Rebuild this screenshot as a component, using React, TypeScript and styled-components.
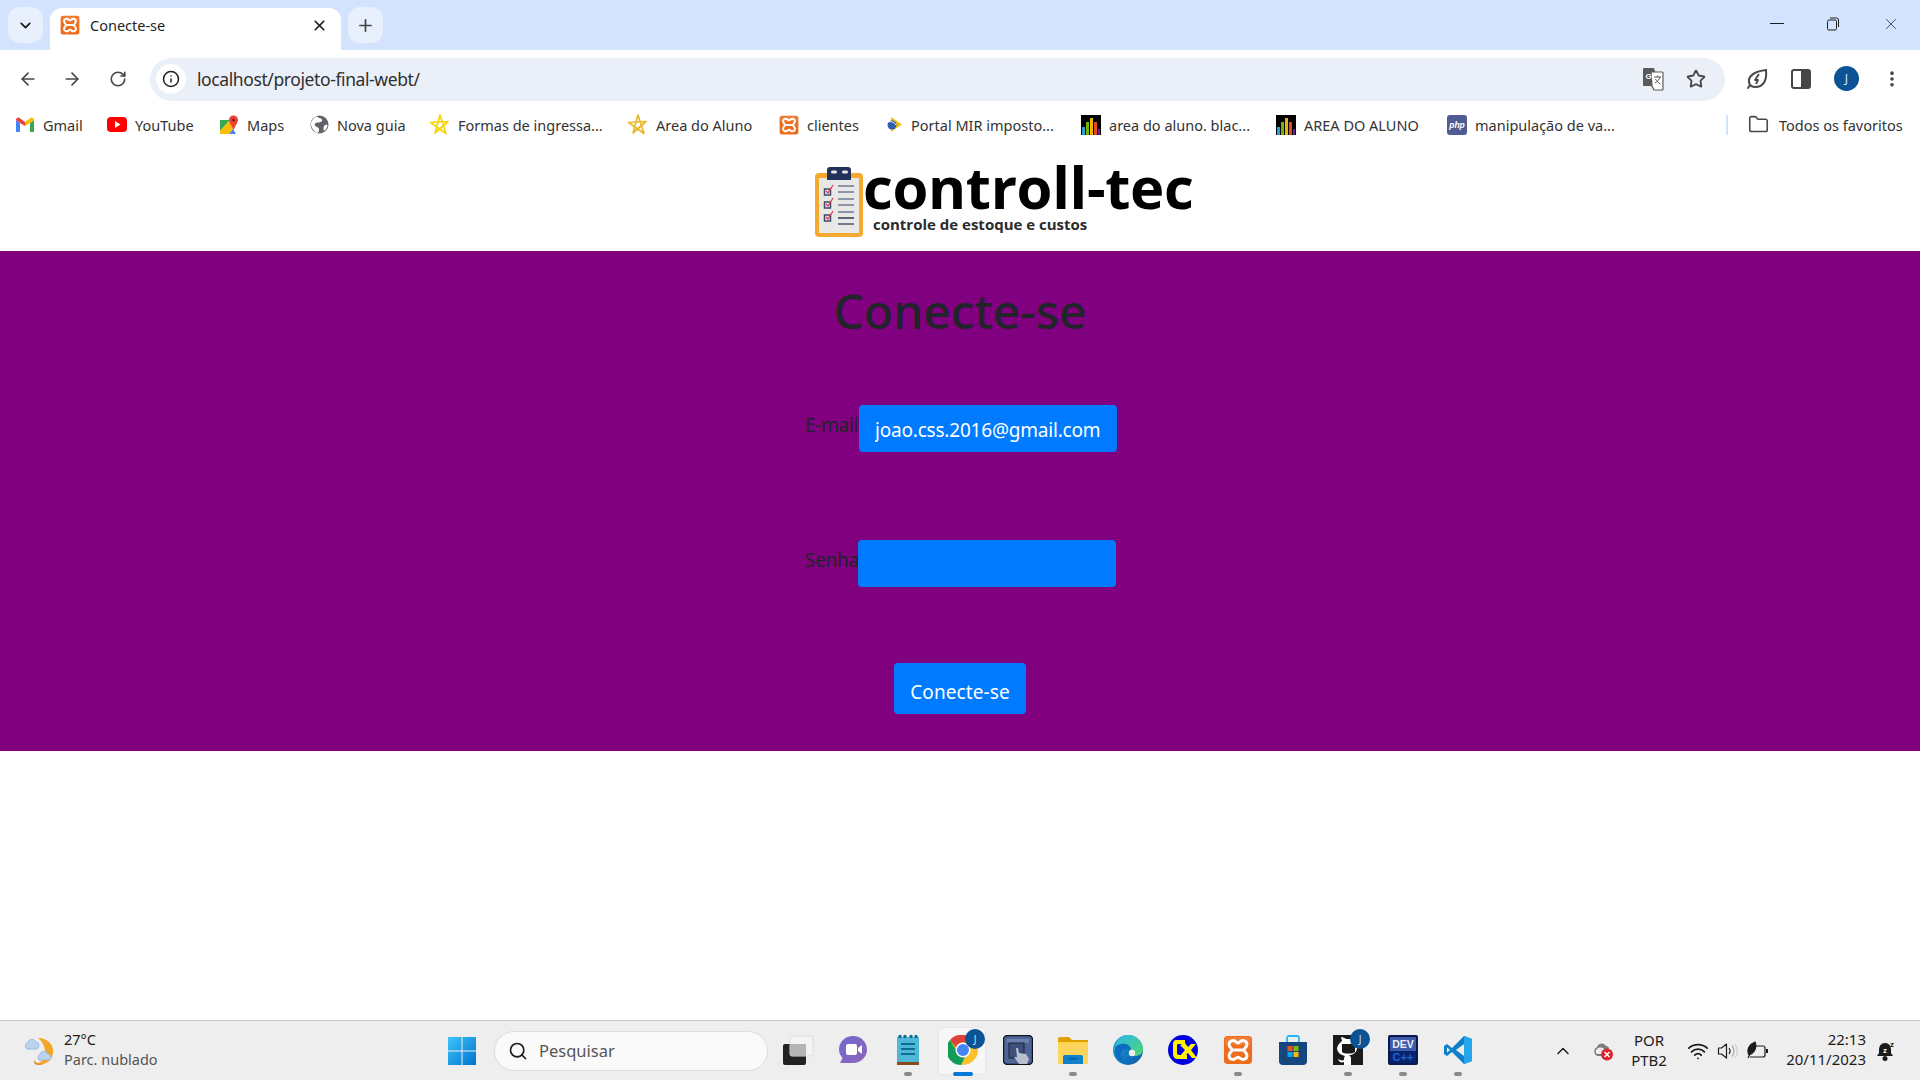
import styled, { createGlobalStyle } from "styled-components";
import { ArrowLeft, ArrowRight, ChevronDown, ChevronUp, Folder, Info, MoreVertical, Plus, RotateCw, Search, Star, Wifi, X } from "lucide-react";

const GlobalStyle = createGlobalStyle`
  html, body {
    margin: 0;
    padding: 0;
    background: #fff;
  }
  * {
    box-sizing: border-box;
  }
`;

const UI_FONT = `"Noto Sans", "Open Sans", sans-serif`;

const Page = styled.div`
  width: 1920px;
  height: 1080px;
  display: flex;
  flex-direction: column;
  overflow: hidden;
  font-family: ${UI_FONT};
`;

/* ---------- browser chrome ---------- */

const TabStrip = styled.div`
  height: 50px;
  background: #d3e3fd;
  display: flex;
  padding-left: 8px;
  flex-shrink: 0;
`;

const RoundButton = styled.div`
  width: 35px;
  height: 36px;
  margin-top: 7px;
  border-radius: 12px;
  background: #e9f0fd;
  color: #1f1f1f;
  display: flex;
  align-items: center;
  justify-content: center;
`;

const Tab = styled.div`
  width: 291px;
  height: 42px;
  margin: 8px 7px 0 7px;
  padding: 0 13px 8px 10px;
  border-radius: 12px 12px 0 0;
  background: #fff;
  display: flex;
  align-items: center;
  gap: 10px;
  font-size: 14.5px;
  color: #1f1f1f;
`;

const TabTitle = styled.span`
  flex: 1;
`;

const WindowControls = styled.div`
  margin-left: auto;
  display: flex;
  align-items: center;
  height: 50px;
  padding: 0 20px 2px 0;
  gap: 42px;
  color: #1f1f1f;
`;

const Toolbar = styled.div`
  height: 56px;
  flex-shrink: 0;
  background: #fff;
  display: flex;
  align-items: flex-start;
  padding: 8px 0 0 18px;
  color: #474747;
`;

const NavButton = styled.div<{ $pl?: number }>`
  width: 44px;
  height: 42px;
  display: flex;
  align-items: center;
  padding-left: ${(p) => p.$pl ?? 0}px;
`;

const Omnibox = styled.div`
  width: 1575px;
  height: 43px;
  border-radius: 22px;
  background: #ebeff8;
  display: flex;
  align-items: center;
  padding: 0 19px 2px 6px;
  font-size: 17.5px;
  color: #1f1f1f;
`;

const InfoChip = styled.div`
  width: 30px;
  height: 30px;
  border-radius: 50%;
  background: #fff;
  display: flex;
  align-items: center;
  justify-content: center;
  margin-right: 11px;
`;

const Url = styled.span`
  flex: 1;
  letter-spacing: -0.4px;
  color: #303030;
`;

const OmniIcons = styled.div`
  display: flex;
  align-items: center;
  gap: 22px;
`;

const ToolbarIcons = styled.div`
  display: flex;
  align-items: center;
  height: 41px;
  margin-left: 21px;
  gap: 23px;
`;

const Avatar = styled.div`
  width: 25px;
  height: 25px;
  border-radius: 50%;
  background: #0b5394;
  color: #dbe7f5;
  font-size: 12px;
  display: flex;
  align-items: center;
  justify-content: center;
`;

const BookmarksBar = styled.div`
  height: 39px;
  flex-shrink: 0;
  background: #fff;
  display: flex;
  align-items: center;
  padding: 0 0 2px 15px;
  font-size: 14.5px;
  color: #333;
`;

const Bookmark = styled.div<{ $w: number }>`
  width: ${(p) => p.$w}px;
  display: flex;
  align-items: center;
  gap: 8px;
  white-space: nowrap;
`;

const BarDivider = styled.div`
  width: 2px;
  height: 20px;
  background: #d3e3fd;
  margin: 0 20px 0 auto;
`;

const AllBookmarks = styled.div`
  display: flex;
  align-items: center;
  gap: 10px;
  width: 172px;
  white-space: nowrap;
`;

/* ---------- page content ---------- */

const LogoHeader = styled.header`
  height: 106px;
  flex-shrink: 0;
  background: #fff;
  display: flex;
  align-items: flex-start;
  padding: 22px 0 0 815px;
`;

const LogoWords = styled.div`
  margin-top: -8px;
  font-family: "Open Sans", sans-serif;
  font-weight: 700;
  color: #000;
`;

const LogoName = styled.div`
  font-size: 58px;
  line-height: 56px;
  letter-spacing: -0.35px;
`;

const LogoTag = styled.div`
  margin-left: 10px;
  font-size: 15px;
  line-height: 18px;
  color: #2b2b2b;
`;

const Main = styled.main`
  height: 500px;
  flex-shrink: 0;
  background: #800080;
  display: flex;
  flex-direction: column;
  align-items: center;
  padding-top: 31px;
  color: #212529;
`;

const Title = styled.h1`
  margin: 0 0 65px;
  font-size: 48px;
  font-weight: 500;
  line-height: 58px;
`;

const LoginForm = styled.form`
  width: 312px;
  margin-left: 2px;
  display: flex;
  flex-direction: column;
`;

const FormRow = styled.div<{ $mb: number }>`
  display: flex;
  align-items: flex-start;
  margin-bottom: ${(p) => p.$mb}px;
`;

const FieldLabel = styled.label<{ $w: number }>`
  width: ${(p) => p.$w}px;
  font-size: 19px;
  line-height: 41px;
  letter-spacing: -0.3px;
  white-space: nowrap;
`;

const Field = styled.input`
  width: 258px;
  height: 47px;
  border: 0;
  outline: 0;
  border-radius: 4px;
  background: #007bff;
  color: #fff;
  padding: 3px 0 0 16px;
  font-family: ${UI_FONT};
  font-size: 19px;
  letter-spacing: -0.2px;
`;

const SubmitButton = styled.button`
  width: 132px;
  height: 51px;
  margin-left: 89px;
  padding: 6px 0 0;
  border: 0;
  border-radius: 4px;
  background: #007bff;
  color: #fff;
  font-family: ${UI_FONT};
  font-size: 19px;
  letter-spacing: 0.1px;
`;

const Spacer = styled.div`
  flex: 1;
  background: #fff;
`;

/* ---------- taskbar ---------- */

const Taskbar = styled.footer`
  height: 60px;
  flex-shrink: 0;
  background: #eeeeee;
  border-top: 1px solid #c6c6c6;
  display: flex;
  align-items: center;
`;

const Weather = styled.div`
  width: 447px;
  padding-left: 24px;
  display: flex;
  align-items: center;
  gap: 8px;
  font-size: 14.5px;
  line-height: 20px;
  color: #1c1c1c;
`;

const WeatherText = styled.div`
  padding-bottom: 4px;
`;

const WeatherSub = styled.div`
  color: #555;
`;

const SearchBox = styled.div`
  width: 274px;
  height: 40px;
  margin-left: 17px;
  border-radius: 20px;
  background: #fafafa;
  border: 1px solid #dedede;
  display: flex;
  align-items: center;
  gap: 11px;
  padding-left: 13px;
  font-size: 16.5px;
  color: #555;
`;

const Apps = styled.div`
  margin-left: 2px;
  display: flex;
`;

const AppSlot = styled.div<{ $active?: boolean }>`
  position: relative;
  width: 55px;
  height: 59px;
  display: flex;
  align-items: center;
  justify-content: center;
  padding-bottom: 2px;

  ${(p) =>
    p.$active &&
    `
    &::before {
      content: "";
      position: absolute;
      left: 3px;
      right: 4px;
      top: 6px;
      bottom: 5px;
      border-radius: 5px;
      background: #f7f7f7;
      border: 1px solid #e6e6e6;
    }
  `}
  & > svg {
    position: relative;
  }
`;

const RunDot = styled.span<{ $active?: boolean }>`
  position: absolute;
  bottom: 4px;
  left: 50%;
  transform: translateX(-50%);
  width: ${(p) => (p.$active ? 20 : 8)}px;
  height: 4px;
  border-radius: 2px;
  background: ${(p) => (p.$active ? "#0078d4" : "#8a8a8a")};
`;

const Badge = styled.span`
  position: absolute;
  top: 8px;
  right: 5px;
  width: 20px;
  height: 20px;
  border-radius: 50%;
  background: #0b5394;
  color: #cfe0f2;
  font-size: 10px;
  display: flex;
  align-items: center;
  justify-content: center;
`;

const Tray = styled.div`
  margin-left: auto;
  padding-right: 14px;
  display: flex;
  align-items: center;
  color: #1c1c1c;
  font-size: 15px;
`;

const TrayCell = styled.div<{ $w: number }>`
  width: ${(p) => p.$w}px;
  display: flex;
  align-items: center;
  justify-content: center;
`;

const LangBlock = styled.div`
  width: 52px;
  margin-right: 8px;
  padding-bottom: 2px;
  text-align: center;
  line-height: 20px;
`;

const Clock = styled.div`
  width: 84px;
  padding-bottom: 4px;
  text-align: right;
  line-height: 20px;
  margin-left: 9px;
  white-space: nowrap;
`;

/* ---------- drawn icons ---------- */

const XamppIcon = ({ size = 20 }: { size?: number }) => (
  <svg width={size} height={size} viewBox="0 0 32 32">
    <rect x="1" y="1" width="30" height="30" rx="4" fill="#ed6d1d" />
    <rect x="2" y="2" width="28" height="9" rx="3" fill="#f28b4a" opacity="0.6" />
    <path
      d="M6.5 10c0-4 4.5-5 7-3 1 .8 1.700 1.400 2.500 1.400S17.500 7.800 18.500 7c2.500-2 7-1 7 3 0 3-2.500 4-3.500 6 1 2 3.500 3 3.500 6 0 4-4.500 5-7 3-1-.8-1.700-1.400-2.500-1.400S14.500 24.200 13.500 25c-2.500 2-7 1-7-3 0-3 2.500-4 3.500-6-1-2-3.500-3-3.500-6z"
      fill="none"
      stroke="#fff"
      strokeWidth="3.200"
    />
    <path d="M11 16h10" stroke="#fff" strokeWidth="3.200" />
  </svg>
);

const GmailIcon = () => (
  <svg width="20" height="16" viewBox="0 0 20 16">
    <path d="M1 15V3l4 3v9z" fill="#4285f4" />
    <path d="M15 15V6l4-3v12z" fill="#34a853" />
    <path d="M5 6 1 3c0-2 2-3 3.500-2L10 5v4z" fill="#ea4335" />
    <path d="m15 6 4-3c0-2-2-3-3.500-2L10 5v4z" fill="#fbbc04" />
  </svg>
);

const YouTubeIcon = () => (
  <svg width="20" height="15" viewBox="0 0 20 15">
    <rect width="20" height="15" rx="4" fill="#f00" />
    <path d="m8 4 5.500 3.500L8 11z" fill="#fff" />
  </svg>
);

const MapsIcon = () => (
  <svg width="20" height="20" viewBox="0 0 20 20">
    <path d="M1 5h10L1 16z" fill="#34a853" />
    <path d="M1 16 11 5l3 9-4 5H1z" fill="#fbbc04" />
    <path d="M10 19l4-5 3 5z" fill="#4285f4" />
    <circle cx="14.500" cy="5" r="4.500" fill="#ea4335" />
    <path d="m11 8 3.500 7L18 8z" fill="#ea4335" />
    <circle cx="14.500" cy="5" r="1.600" fill="#8e1b12" />
  </svg>
);

const GlobeIcon = () => (
  <svg width="19" height="19" viewBox="0 0 19 19">
    <circle cx="9.500" cy="9.500" r="9" fill="#5f6368" />
    <path d="M7 1.500c1 2 4 1 5 3s-2 3-4 3-4 1-3 3 4 1 4 4-1 3-2 3.500C4 16 1 13 1 9c0-3 3-7 6-7.500zM15 10c2-.5 2.500 0 2.500 1-.5 2-2 4-3.500 5-1-2-.5-5 1-6z" fill="#fff" />
  </svg>
);

// the two bookmark stars are hand drawn in one stroke, crossing themselves
const StarOutlineIcon = ({ color }: { color: string }) => (
  <svg width="21" height="21" viewBox="0 0 21 21">
    <path d="M11 1 6 19 19 7.500 1.500 8.500 17 19.500z" fill="none" stroke={color} strokeWidth="1.700" strokeLinejoin="round" />
  </svg>
);

const PortalIcon = () => (
  <svg width="17" height="17" viewBox="0 0 17 17">
    <path d="M5 1l11 7.500L5 16z" fill="#f4c20d" />
    <circle cx="6" cy="9" r="4.500" fill="#2f5fb3" />
    <path d="M2 6c3-1 6 0 8 3" stroke="#fff" strokeWidth="1" fill="none" />
  </svg>
);

const BarsIcon = () => (
  <svg width="20" height="20" viewBox="0 0 20 20">
    <rect width="20" height="20" fill="#000" />
    <rect x="1" y="12" width="3" height="8" fill="#2a9fd6" />
    <rect x="5" y="7" width="3" height="13" fill="#77b300" />
    <rect x="9" y="3" width="3" height="17" fill="#e6b800" />
    <rect x="13" y="7" width="3" height="13" fill="#e64a19" />
    <rect x="17" y="14" width="2" height="6" fill="#6a1b9a" />
  </svg>
);

const PhpIcon = () => (
  <svg width="20" height="20" viewBox="0 0 20 20">
    <rect width="20" height="20" rx="3" fill="#4f5b93" />
    <text x="10" y="13" fontFamily="Liberation Sans" fontSize="8.500" fontStyle="italic" fontWeight="700" textAnchor="middle" fill="#fff">
      php
    </text>
  </svg>
);

const TranslateIcon = () => (
  <svg width="22" height="24" viewBox="0 0 22 24">
    <path d="M2 1h10l6 18H2a1 1 0 0 1-1-1V2a1 1 0 0 1 1-1z" fill="#5a5a5a" />
    <path d="M9 5h11a1 1 0 0 1 1 1v16a1 1 0 0 1-1 1h-8l-2-4z" fill="#fff" stroke="#5a5a5a" strokeWidth="1.200" />
    <text x="6.500" y="12" fontFamily="Liberation Sans" fontSize="8" fontWeight="700" textAnchor="middle" fill="#fff">
      G
    </text>
    <path d="M12 10h7M15.500 8.500V10M18 10c-1 3-3 5-5 6M13.500 12c1 2 3 4 5 5" stroke="#5a5a5a" strokeWidth="1" fill="none" />
  </svg>
);

const LeafBoltIcon = () => (
  <svg width="22" height="24" viewBox="0 0 22 24">
    <path d="M4 18C1 12 4 5 20 3c1 10-2 17-11 17-2 0-4-1-5-2zM4 18l-2 3" fill="none" stroke="#474747" strokeWidth="2" strokeLinecap="round" />
    <path d="m13 7-4 6h3l-2 4" fill="none" stroke="#474747" strokeWidth="1.800" strokeLinejoin="round" />
  </svg>
);

const SidePanelIcon = () => (
  <svg width="20" height="20" viewBox="0 0 20 20">
    <rect x="1" y="1" width="18" height="18" rx="2" fill="none" stroke="#474747" strokeWidth="2" />
    <rect x="10" y="1" width="9" height="18" fill="#474747" />
  </svg>
);

const RestoreIcon = () => (
  <svg width="14" height="14" viewBox="0 0 14 14" fill="none" stroke="#1f1f1f" strokeWidth="1">
    <rect x="1.500" y="3" width="9" height="10" rx="1.500" />
    <path d="M4 1h6.500A2 2 0 0 1 12.500 3v7" />
  </svg>
);

const ClipboardLogo = () => (
  <svg width="48" height="70" viewBox="0 0 48 70">
    <rect x="0" y="6" width="48" height="64" rx="4" fill="#f5a92e" />
    <rect x="4" y="11" width="40" height="55" fill="#e8e8e6" />
    <path d="M12 6V3a3 3 0 0 1 3-3h18a3 3 0 0 1 3 3v10H12z" fill="#22325a" />
    <rect x="16" y="3.500" width="6" height="3" rx="1.500" fill="#e8e8e6" />
    <rect x="27" y="3.500" width="6" height="3" rx="1.500" fill="#e8e8e6" />
    {[22, 35, 48].map((y) => (
      <g key={y}>
        <rect x="9.500" y={y} width="6" height="6" fill="none" stroke="#3e4a6b" strokeWidth="1.500" />
        <path d={`M11 ${y + 2}l2 2 5-8`} fill="none" stroke="#e5344a" strokeWidth="1.200" />
        <path d={`M23 ${y - 3}h16M23 ${y + 3}h16`} stroke="#6f7b94" strokeWidth="1.600" />
      </g>
    ))}
    <path d="M23 51h16M23 57h16" stroke="#4c5673" strokeWidth="1.600" />
  </svg>
);

const WeatherIcon = () => (
  <svg width="32" height="30" viewBox="0 0 32 30">
    <path d="M14 2c10 0 16 7 15 15-1 8-8 13-16 11 6-3 9-8 8-14-1-5-3-9-7-12z" fill="#f5a524" />
    <path d="M10 24c2 3 4 4 8 4 1 0-3 2-7 0-1-1-1-3-1-4z" fill="#e5801c" />
    <path d="M3 13a4 4 0 0 1 1-7c1-3 6-4 8 0 3 0 4 5 1 7z" fill="#bcd3ef" stroke="#8fb0dd" strokeWidth="0.800" />
    <path d="M15 24a4 4 0 0 1 1-6c1-3 6-4 8 0 3 0 4 5 1 6z" fill="#bcd3ef" stroke="#8fb0dd" strokeWidth="0.800" />
  </svg>
);

const StartIcon = () => (
  <svg width="30" height="30" viewBox="0 0 30 30">
    <defs>
      <linearGradient id="startGrad" x1="0" y1="0" x2="1" y2="1">
        <stop offset="0" stopColor="#3fc5f8" />
        <stop offset="1" stopColor="#0071cf" />
      </linearGradient>
    </defs>
    <path d="M1 1h13.500v13.500H1zM15.500 1H29v13.500H15.500zM1 15.500h13.500V29H1zM15.500 15.500H29V29H15.500z" fill="url(#startGrad)" />
  </svg>
);

const TaskViewIcon = () => (
  <svg width="32" height="30" viewBox="0 0 32 30">
    <rect x="1" y="9" width="23" height="21" rx="2" fill="#222" />
    <rect x="8" y="1" width="23" height="20" rx="2" fill="#f4f4f4" stroke="#ddd" />
    <rect x="8" y="9" width="16" height="12" fill="#b5b5b5" />
  </svg>
);

const ChatIcon = () => (
  <svg width="30" height="30" viewBox="0 0 30 30">
    <defs>
      <linearGradient id="chatGrad" x1="0" y1="0" x2="1" y2="1">
        <stop offset="0" stopColor="#6f6bd0" />
        <stop offset="1" stopColor="#8f63b8" />
      </linearGradient>
    </defs>
    <path d="M15 1c8 0 14 6 14 13.500S23 28 15 28H2l2.500-5C2.500 20.500 1 18 1 14.500 1 7 7 1 15 1z" fill="url(#chatGrad)" />
    <rect x="8" y="9" width="11" height="11" rx="2" fill="#fff" />
    <path d="m20 13 4-3v9l-4-3z" fill="#fff" />
  </svg>
);

const NotepadIcon = () => (
  <svg width="24" height="31" viewBox="0 0 24 31">
    <rect x="1" y="3" width="22" height="26" fill="#4fb8d8" />
    <rect x="1" y="28" width="22" height="3" fill="#8a4a1c" />
    <path d="M5 10h14M5 15h14M5 20h14" stroke="#0d6d8f" strokeWidth="2" />
    {[4, 9, 15, 20].map((x) => (
      <circle key={x} cx={x} cy="2.500" r="1.700" fill="#0d6d8f" />
    ))}
  </svg>
);

const ChromeIcon = () => (
  <svg width="30" height="30" viewBox="0 0 30 30">
    <circle cx="15" cy="15" r="15" fill="#fbc02d" />
    <path d="M15 0a15 15 0 0 1 13 7.500H15a7.500 7.500 0 0 0-7 5L2 5A15 15 0 0 1 15 0z" fill="#db4437" />
    <path d="M2 5l6 10a7.500 7.500 0 0 0 9 7l-4 7.900A15 15 0 0 1 2 5z" fill="#0f9d58" />
    <circle cx="15" cy="15" r="7.500" fill="#fff" />
    <circle cx="15" cy="15" r="6" fill="#4285f4" />
  </svg>
);

const TouchIcon = () => (
  <svg width="30" height="30" viewBox="0 0 30 30">
    <rect x="0.500" y="0.500" width="29" height="29" rx="4" fill="#4f6496" stroke="#10131c" strokeWidth="1.400" />
    <rect x="4" y="4" width="22" height="4" fill="#7f93bd" opacity="0.6" />
    <rect x="6" y="8" width="15" height="15" fill="#3e4f7a" stroke="#1b2238" />
    <path d="M13 13l2 0 1 5 7 1 3 5-2 5h-8l-5-7 3 0z" fill="#b8bfcd" />
  </svg>
);

const FolderAppIcon = () => (
  <svg width="30" height="28" viewBox="0 0 30 28">
    <path d="M0 3a2 2 0 0 1 2-2h9l3 3h16v6H0z" fill="#e0a100" />
    <path d="M0 6h30v22H0z" fill="#fcd34d" />
    <path d="M0 8h30v20H0z" fill="#fdd55c" />
    <path d="M5 28V21a2 2 0 0 1 2-2h16a2 2 0 0 1 2 2v7z" fill="#0f80cc" />
    <rect x="11" y="22" width="8" height="1.500" fill="#075a94" />
  </svg>
);

const EdgeIcon = () => (
  <svg width="30" height="30" viewBox="0 0 30 30">
    <defs>
      <linearGradient id="edgeGrad" x1="0" y1="0" x2="1" y2="1">
        <stop offset="0" stopColor="#1f9fe0" />
        <stop offset="1" stopColor="#0c59a4" />
      </linearGradient>
      <linearGradient id="edgeTop" x1="0" y1="0" x2="1" y2="1">
        <stop offset="0" stopColor="#2bb8ee" />
        <stop offset="1" stopColor="#52d66f" />
      </linearGradient>
    </defs>
    <circle cx="15" cy="15" r="15" fill="url(#edgeGrad)" />
    <path d="M15 0c8 0 15 6 15 14 0 5-4 7-8 7-3 0-6-2-5-5 2-1 1-6-4-6-5 0-9 3-12 6C2 6 8 0 15 0z" fill="url(#edgeTop)" />
    <path d="M2 12c3-3 7-4 11-3 3 1 5 3 4 6-3-2-8-1-9 3-1 5 3 9 9 11-8 1-14-5-15-12z" fill="#0c6dbf" />
    <circle cx="19" cy="18" r="3.200" fill="#eeeeee" />
  </svg>
);

const GcxIcon = () => (
  <svg width="30" height="30" viewBox="0 0 30 30">
    <circle cx="15" cy="15" r="15" fill="#0000e0" />
    <path d="M17 5H8c-2 0-3 2-3 4v10c0 3 2 5 5 5h9v-4H11c-1 0-2-1-2-2v-8c0-1 1-1 2-1h6z" fill="#fff200" />
    <path d="M12 10l5 5-5 6h5l3-3 4 5h5l-6-8 5-6h-5l-3 3-3-4z" fill="#fff200" />
  </svg>
);

const StoreIcon = () => (
  <svg width="30" height="30" viewBox="0 0 30 30">
    <path d="M9 7V3a2 2 0 0 1 2-2h8a2 2 0 0 1 2 2v4" fill="none" stroke="#29b6f6" strokeWidth="1.800" />
    <path d="M1 7h28v19a4 4 0 0 1-4 4H5a4 4 0 0 1-4-4z" fill="#15477e" />
    <rect x="9.500" y="11" width="5" height="5" fill="#f25022" />
    <rect x="15.500" y="11" width="5" height="5" fill="#7fba00" />
    <rect x="9.500" y="17" width="5" height="5" fill="#00a4ef" />
    <rect x="15.500" y="17" width="5" height="5" fill="#ffb900" />
  </svg>
);

const GithubIcon = () => (
  <svg width="30" height="30" viewBox="0 0 30 30">
    <rect width="30" height="30" fill="#1a1a1a" />
    <path d="M9 6 8 2c2 0 4 1 5 2h5c1-1 3-2 5-2l-1 4c2 2 3 5 2 8-1 4-4 6-8 6 2 1 2 3 2 5v5h-7v-3c-3 1-5 0-6-3l2 1c2 1 4 0 4 0 0-1 0-3 1-4-4-1-7-3-8-7 0-3 2-6 5-8z" fill="#fff" />
    <path d="M9 9h13v8c-2 2-11 2-13 0z" fill="#1a1a1a" />
  </svg>
);

const DevCppIcon = () => (
  <svg width="30" height="30" viewBox="0 0 30 30">
    <rect width="30" height="30" rx="2" fill="#0a1a4f" />
    <rect x="2" y="2" width="26" height="14" fill="#3d5ba9" />
    <rect x="2" y="16" width="26" height="12" fill="#08246e" />
    <text x="15" y="13" fontFamily="Liberation Sans" fontSize="10.500" fontWeight="700" textAnchor="middle" fill="#e8ecf5">
      DEV
    </text>
    <text x="15" y="26" fontFamily="Liberation Sans" fontSize="11" fontWeight="700" textAnchor="middle" fill="#1a64d8">
      C++
    </text>
  </svg>
);

const VsCodeIcon = () => (
  <svg width="30" height="30" viewBox="0 0 30 30">
    <path d="M21 1 9 13 4 9 1 11v8l3 2 5-4 12 12 8-3V4z" fill="#0f7fc9" />
    <path d="M21 1l8 3v22l-8 3z" fill="#22a7ee" />
    <path d="M21 9v12l-8-6z" fill="#eeeeee" />
    <path d="M4 12.500v5l3-2.500z" fill="#eeeeee" />
  </svg>
);

const TrayCloudIcon = () => (
  <svg width="22" height="20" viewBox="0 0 22 20">
    <path d="M5 15a5 5 0 0 1 0-9c1-4 7-5 9-1 2 0 3 1 3 3v7z" fill="#7d7d7d" />
    <path d="M5 13a3 3 0 0 1 0-5c2-2 5-2 7 0v5z" fill="#eee" />
    <circle cx="15" cy="13.500" r="6" fill="#d9232e" />
    <path d="m12.500 11 5 5m0-5-5 5" stroke="#fff" strokeWidth="1.500" />
  </svg>
);

const SpeakerIcon = () => (
  <svg width="22" height="20" viewBox="0 0 22 20" fill="none" strokeWidth="1.200">
    <path d="M1.500 7v6h3l5 4V3l-5 4z" stroke="#1c1c1c" strokeLinejoin="round" />
    <path d="M12 7c1.300 1.800 1.300 4.200 0 6" stroke="#1c1c1c" />
    <path d="M15 4.500c2.600 3.200 2.600 7.800 0 11" stroke="#a8a8a8" />
    <path d="M18 3c3 4 3 10 0 14" stroke="#cfcfcf" />
  </svg>
);

const BatteryLeafIcon = () => (
  <svg width="22" height="20" viewBox="0 0 22 20" fill="none" stroke="#1c1c1c" strokeWidth="1.200">
    <path d="M6 5h10a2 2 0 0 1 2 2v7a2 2 0 0 1-2 2H3" />
    <rect x="19" y="8" width="2" height="4" fill="#1c1c1c" stroke="none" />
    <path d="M2 14C-1 8 3 3 8 1c2 5 0 11-6 13zM1 17l5-10" fill="#1c1c1c" />
  </svg>
);

const SnoozeBellIcon = () => (
  <svg width="19" height="22" viewBox="0 0 19 22">
    <path d="M8 3c-4 0-6 3-6 7v3l-2 3h16l-2-3v-3c0-4-2-7-6-7z" fill="#1c1c1c" />
    <circle cx="8" cy="18.500" r="2.500" fill="#1c1c1c" />
    <text x="8" y="13" fontFamily="Liberation Sans" fontSize="8" fontWeight="700" textAnchor="middle" fill="#fff">
      z
    </text>
    <text x="15" y="7" fontFamily="Liberation Sans" fontSize="8" fontWeight="700" textAnchor="middle" fill="#1c1c1c">
      z
    </text>
  </svg>
);

type BookmarkItem = { label: string; icon: React.ReactNode; width: number };

const bookmarks: BookmarkItem[] = [
  { label: "Gmail", icon: <GmailIcon />, width: 92 },
  { label: "YouTube", icon: <YouTubeIcon />, width: 112 },
  { label: "Maps", icon: <MapsIcon />, width: 91 },
  { label: "Nova guia", icon: <GlobeIcon />, width: 119 },
  { label: "Formas de ingressa...", icon: <StarOutlineIcon color="#f5d50b" />, width: 198 },
  { label: "Area do Aluno", icon: <StarOutlineIcon color="#e8b92a" />, width: 152 },
  { label: "clientes", icon: <XamppIcon />, width: 107 },
  { label: "Portal MIR imposto...", icon: <PortalIcon />, width: 195 },
  { label: "area do aluno. blac...", icon: <BarsIcon />, width: 195 },
  { label: "AREA DO ALUNO", icon: <BarsIcon />, width: 171 },
  { label: "manipulação de va...", icon: <PhpIcon />, width: 180 },
];

type TaskApp = { id: string; icon: React.ReactNode; running?: boolean; active?: boolean; badge?: boolean };

const taskApps: TaskApp[] = [
  { id: "taskview", icon: <TaskViewIcon /> },
  { id: "chat", icon: <ChatIcon /> },
  { id: "notepad", icon: <NotepadIcon />, running: true },
  { id: "chrome", icon: <ChromeIcon />, active: true, badge: true },
  { id: "touch", icon: <TouchIcon /> },
  { id: "folder", icon: <FolderAppIcon />, running: true },
  { id: "edge", icon: <EdgeIcon /> },
  { id: "gcx", icon: <GcxIcon /> },
  { id: "xampp", icon: <XamppIcon size={30} />, running: true },
  { id: "store", icon: <StoreIcon /> },
  { id: "github", icon: <GithubIcon />, running: true, badge: true },
  { id: "dev", icon: <DevCppIcon />, running: true },
  { id: "vscode", icon: <VsCodeIcon />, running: true },
];

const App = () => {
  return (
    <Page>
      <GlobalStyle />
      <TabStrip>
        <RoundButton>
          <ChevronDown size={17} strokeWidth={2.6} />
        </RoundButton>
        <Tab>
          <XamppIcon />
          <TabTitle>Conecte-se</TabTitle>
          <X size={17} strokeWidth={2.4} />
        </Tab>
        <RoundButton>
          <Plus size={19} strokeWidth={2.2} color="#444" />
        </RoundButton>
        <WindowControls>
          <svg width="14" height="2" viewBox="0 0 14 2">
            <rect width="14" height="1" fill="#1f1f1f" />
          </svg>
          <RestoreIcon />
          <X size={18} strokeWidth={1} />
        </WindowControls>
      </TabStrip>

      <Toolbar>
        <NavButton>
          <ArrowLeft size={20} strokeWidth={2} />
        </NavButton>
        <NavButton>
          <ArrowRight size={20} strokeWidth={2} />
        </NavButton>
        <NavButton $pl={3}>
          <RotateCw size={18} strokeWidth={2.2} />
        </NavButton>
        <Omnibox>
          <InfoChip>
            <Info size={18} strokeWidth={2} color="#1f1f1f" />
          </InfoChip>
          <Url>localhost/projeto-final-webt/</Url>
          <OmniIcons>
            <TranslateIcon />
            <Star size={20} strokeWidth={2.2} color="#474747" />
          </OmniIcons>
        </Omnibox>
        <ToolbarIcons>
          <LeafBoltIcon />
          <SidePanelIcon />
          <Avatar>J</Avatar>
          <MoreVertical size={20} strokeWidth={2.4} />
        </ToolbarIcons>
      </Toolbar>

      <BookmarksBar>
        {bookmarks.map((item) => (
          <Bookmark key={item.label} $w={item.width}>
            {item.icon}
            {item.label}
          </Bookmark>
        ))}
        <BarDivider />
        <AllBookmarks>
          <Folder size={21} strokeWidth={1.8} color="#474747" />
          Todos os favoritos
        </AllBookmarks>
      </BookmarksBar>

      <LogoHeader>
        <ClipboardLogo />
        <LogoWords>
          <LogoName>controll-tec</LogoName>
          <LogoTag>controle de estoque e custos</LogoTag>
        </LogoWords>
      </LogoHeader>

      <Main>
        <Title>Conecte-se</Title>
        <LoginForm onSubmit={(e) => e.preventDefault()}>
          <FormRow $mb={88}>
            <FieldLabel $w={54}>E-mail</FieldLabel>
            <Field type="email" value="joao.css.2016@gmail.com" readOnly />
          </FormRow>
          <FormRow $mb={76}>
            <FieldLabel $w={53}>Senha</FieldLabel>
            <Field type="password" readOnly />
          </FormRow>
          <SubmitButton type="submit">Conecte-se</SubmitButton>
        </LoginForm>
      </Main>

      <Spacer />

      <Taskbar>
        <Weather>
          <WeatherIcon />
          <WeatherText>
            27°C
            <WeatherSub>Parc. nublado</WeatherSub>
          </WeatherText>
        </Weather>
        <StartIcon />
        <SearchBox>
          <Search size={20} strokeWidth={2} color="#1c1c1c" />
          Pesquisar
        </SearchBox>
        <Apps>
          {taskApps.map((app) => (
            <AppSlot key={app.id} $active={app.active}>
              {app.icon}
              {app.badge && <Badge>J</Badge>}
              {(app.running || app.active) && <RunDot $active={app.active} />}
            </AppSlot>
          ))}
        </Apps>
        <Tray>
          <TrayCell $w={40}>
            <ChevronUp size={20} strokeWidth={1.8} />
          </TrayCell>
          <TrayCell $w={40}>
            <TrayCloudIcon />
          </TrayCell>
          <LangBlock>
            POR
            <br />
            PTB2
          </LangBlock>
          <TrayCell $w={30}>
            <Wifi size={22} strokeWidth={2} />
          </TrayCell>
          <TrayCell $w={30}>
            <SpeakerIcon />
          </TrayCell>
          <TrayCell $w={30}>
            <BatteryLeafIcon />
          </TrayCell>
          <Clock>
            22:13
            <br />
            20/11/2023
          </Clock>
          <TrayCell $w={40}>
            <SnoozeBellIcon />
          </TrayCell>
        </Tray>
      </Taskbar>
    </Page>
  );
};

export default App;
